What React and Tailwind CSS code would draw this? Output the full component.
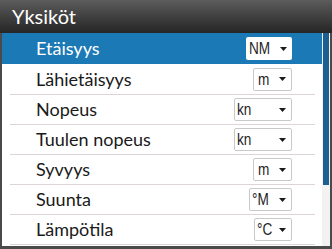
import React from 'react';

const rows = [
  { id: 1, label: 'Etäisyys', unit: 'NM', w: 'w-[46px]', pl: 'pl-[3px]' },
  { id: 2, label: 'Lähietäisyys', unit: 'm', w: 'w-[39px]', pl: 'pl-[4px]' },
  { id: 3, label: 'Nopeus', unit: 'kn', w: 'w-[58px]', pl: 'pl-[2px]' },
  { id: 4, label: 'Tuulen nopeus', unit: 'kn', w: 'w-[58px]', pl: 'pl-[2px]' },
  { id: 5, label: 'Syvyys', unit: 'm', w: 'w-[39px]', pl: 'pl-[4px]' },
  { id: 6, label: 'Suunta', unit: '°M', w: 'w-[43px]', pl: 'pl-[2px]' },
  { id: 7, label: 'Lämpötila', unit: '°C', w: 'w-[38px]', pl: 'pl-[2px]' },
];

const Arrow = () => (
  <svg width="7" height="4" viewBox="0 0 7 4" className="shrink-0">
    <path d="M0 0h7L3.5 4z" fill="#1a1a1a" />
  </svg>
);

const Dropdown = ({ unit, w, pl, active }) => (
  <div
    className={`${w} ${pl} h-[23px] pr-[5px] flex items-center justify-between bg-white rounded-[2px] text-[17px] leading-none text-[#1f1f1f] ${
      active ? '' : 'border border-[#c9c9c9]'
    }`}
    style={{ fontFamily: '"Liberation Sans", sans-serif' }}
  >
    <span className="inline-block origin-left scale-x-[0.8]">{unit}</span>
    <Arrow />
  </div>
);

const App = () => {
  return (
    <div className="w-[332px] h-[249px] bg-white overflow-hidden flex flex-col" style={{ fontFamily: 'Lato, "Liberation Sans", sans-serif' }}>
      {/* Header */}
      <div className="h-[33px] shrink-0 flex items-center pl-[12px] pb-[2px] bg-linear-to-b from-[#5c5c5c] to-[#262626] text-white text-[20px]">
        Yksiköt
      </div>

      {/* List */}
      <div className="flex-1 flex border-l-2 border-r-2 border-b-[3px] border-[#4a4a4a]">
        <div className="flex-1 flex flex-col">
          {rows.map((row, i) => {
            const active = i === 0;
            if (active) {
              return (
                <div key={row.id} className="h-[31px] flex items-center justify-between bg-[#1b79b6] pl-[34px] pr-[30px] text-white text-[18px]">
                  <span>{row.label}</span>
                  <Dropdown {...row} active />
                </div>
              );
            }
            return (
              <div key={row.id} className={`${i === 1 ? 'h-[31px]' : 'h-[30px]'} ml-[8px] mr-[7px] flex items-center justify-between border-b border-[#ddd5d5] pl-[26px] pr-[23px] text-[#1a1a1a] text-[18px]`}>
                <span>{row.label}</span>
                <Dropdown {...row} />
              </div>
            );
          })}
        </div>

        {/* Scrollbar */}
        <div className="w-[8px] bg-[#f2f2f2] flex justify-center">
          <div className="w-[6px] h-[152px] bg-[#1d5f90]"></div>
        </div>
      </div>
    </div>
  );
};

export default App;
